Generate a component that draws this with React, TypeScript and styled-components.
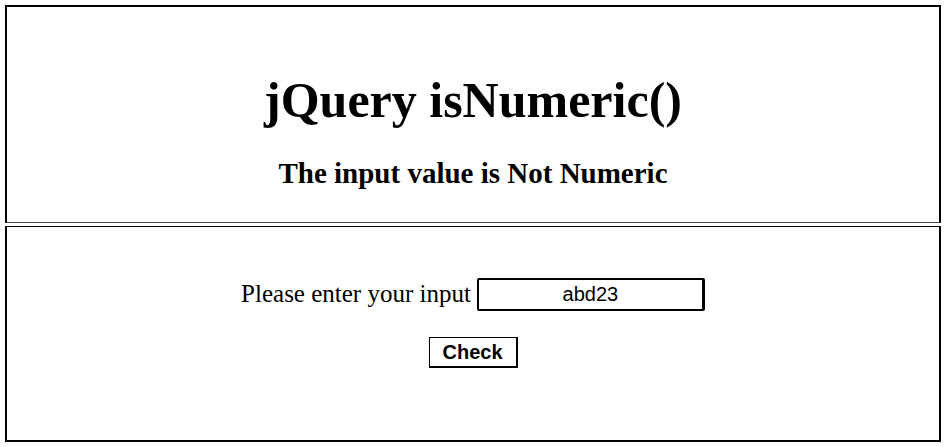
import styled, { createGlobalStyle } from 'styled-components'

const GlobalStyle = createGlobalStyle`
  html, body {
    margin: 0;
    padding: 0;
    background: #fff;
  }
  body {
    font-family: "Liberation Serif", "Times New Roman", serif;
    color: #000;
  }
`

const Page = styled.div`
  width: 936px;
  margin: 5px;
  display: flex;
  flex-direction: column;
`

const TopBox = styled.div`
  height: 215px;
  border: 2px solid #000;
  border-bottom: 1px solid #444;
  display: flex;
  flex-direction: column;
  align-items: center;
`

const Title = styled.h1`
  margin: 65px 0 0;
  font-size: 50px;
  line-height: 56px;
  font-weight: bold;
`

const Result = styled.h3`
  margin: 28px 0 0;
  font-size: 29px;
  line-height: 34px;
  font-weight: bold;
`

const FormBox = styled.div`
  margin-top: 3px;
  height: 213px;
  border: 2px solid #000;
  border-top: 1px solid #000;
  display: flex;
  flex-direction: column;
  align-items: center;
`

const Row = styled.div`
  margin-top: 50px;
  display: flex;
  align-items: center;
  font-size: 25px;
  line-height: 34px;
`

const Label = styled.label`
  margin-right: 6px;
`

const TextInput = styled.input`
  box-sizing: border-box;
  width: 228px;
  height: 33px;
  border: 2px solid #000;
  border-right-width: 3px;
  border-radius: 2px;
  padding: 0 4px;
  font-family: "Liberation Sans", Arial, sans-serif;
  font-size: 20px;
  text-align: center;
  color: #000;
  background: #fff;
  outline: none;
`

const CheckButton = styled.button`
  margin-top: 26px;
  box-sizing: border-box;
  width: 89px;
  height: 31px;
  border: 2px solid #000;
  border-top-width: 1px;
  border-left-width: 1px;
  background: #fff;
  font-family: "Liberation Sans", Arial, sans-serif;
  font-size: 20px;
  font-weight: bold;
  color: #000;
  padding: 0;
  cursor: pointer;
`

export default function App() {
  return (
    <>
      <GlobalStyle />
      <Page>
        <TopBox>
          <Title>jQuery isNumeric()</Title>
          <Result>The input value is Not Numeric</Result>
        </TopBox>
        <FormBox>
          <Row>
            <Label htmlFor="num">Please enter your input</Label>
            <TextInput id="num" defaultValue="abd23" />
          </Row>
          <CheckButton>Check</CheckButton>
        </FormBox>
      </Page>
    </>
  )
}
